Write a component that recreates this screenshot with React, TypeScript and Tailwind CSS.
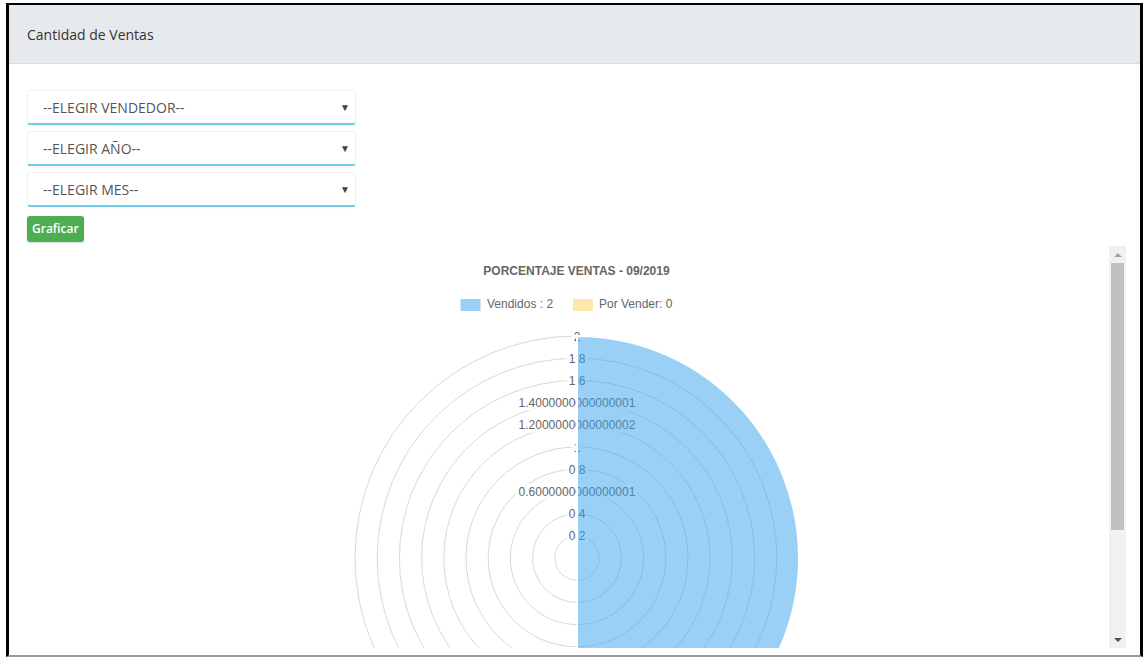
import React from 'react';

const SELECTS = ['--ELEGIR VENDEDOR--', '--ELEGIR AÑO--', '--ELEGIR MES--'];

const TICKS = [
  '0.2',
  '0.4',
  '0.6000000000000001',
  '0.8',
  '1',
  '1.2000000000000002',
  '1.4000000000000001',
  '1.6',
  '1.8',
  '2',
];

// polar chart geometry (px, relative to the chart svg)
const CX = 550;
const CY = 312;
const STEP = 22.2;
const R = STEP * 10;

function textWidth(s: string) {
  let w = 0;
  for (const ch of s) w += ch === '.' ? 3.34 : 6.67;
  return w;
}

function PolarChart() {
  return (
    <svg width={1082} height={402} className="block" style={{ fontFamily: '"Liberation Sans", Arial, sans-serif' }}>
      <text x={549.5} y={25} textAnchor="middle" dominantBaseline="central" fontSize={12} fontWeight={700} fill="#666">
        PORCENTAJE VENTAS - 09/2019
      </text>

      {/* legend */}
      <rect x={433.5} y={53} width={20} height={12} fill="rgba(54,162,235,0.5)" />
      <text x={460} y={58} dominantBaseline="central" fontSize={12} fill="#666">
        Vendidos : 2
      </text>
      <rect x={546} y={53} width={20} height={12} fill="rgba(255,206,86,0.5)" />
      <text x={572} y={58} dominantBaseline="central" fontSize={12} fill="#666">
        Por Vender: 0
      </text>

      {/* radial grid */}
      {TICKS.map((_, i) => (
        <circle key={i} cx={CX} cy={CY} r={STEP * (i + 1)} fill="none" stroke="#d8d8d8" strokeWidth={1} />
      ))}

      {/* tick labels with backdrop */}
      {TICKS.map((t, i) => {
        const w = textWidth(t);
        const y = CY - STEP * (i + 1);
        return (
          <g key={t}>
            <rect x={CX - w / 2 - 2} y={y - 8} width={w + 4} height={16} fill="rgba(255,255,255,0.75)" />
            <text x={CX} y={y + 0.5} textAnchor="middle" dominantBaseline="central" fontSize={12} fill="#666">
              {t}
            </text>
          </g>
        );
      })}

      {/* Vendidos segment: right half */}
      <path
        d={`M ${CX} ${CY} L ${CX} ${CY - R} A ${R} ${R} 0 0 1 ${CX} ${CY + R} Z`}
        fill="rgba(54,162,235,0.5)"
        stroke="#fff"
        strokeWidth={2}
      />
    </svg>
  );
}

function Scrollbar() {
  return (
    <div className="w-[17px] h-full bg-[#f1f1f1] flex flex-col items-center shrink-0">
      <div className="h-[17px] w-full flex items-center justify-center">
        <div className="w-0 h-0 border-l-[4px] border-r-[4px] border-b-[4px] border-l-transparent border-r-transparent border-b-[#a3a3a3]" />
      </div>
      <div className="w-[13px] h-[267px] bg-[#c1c1c1]" />
      <div className="flex-1" />
      <div className="h-[17px] w-full flex items-center justify-center">
        <div className="w-0 h-0 border-l-[4px] border-r-[4px] border-t-[4px] border-l-transparent border-r-transparent border-t-[#505050]" />
      </div>
    </div>
  );
}

export default function App() {
  return (
    <div className="w-[1144px] h-[657px] bg-white pl-[6px] pt-[3px] pr-px overflow-hidden" style={{ fontFamily: '"Open Sans", sans-serif' }}>
      <div className="h-[654px] border-l-[3px] border-r-[3px] border-t-2 border-b-2 border-black border-b-[#9a9a9a] flex flex-col overflow-hidden">
        <div className="h-[59px] shrink-0 bg-[#e6eaed] border-b border-[#d9dde0] flex items-center px-[18px]">
          <span className="text-[14px] text-[#333]">Cantidad de Ventas</span>
        </div>

        <div className="flex-1 px-[18px] pt-[26px] flex flex-col min-h-0">
          <div className="w-[329px] flex flex-col gap-[6px]">
            {SELECTS.map((s) => (
              <div
                key={s}
                className="h-[35px] rounded-[3px] border border-[#f1f1f1] border-b-2 border-b-[#6fcbea] shadow-[0_1px_2px_rgba(0,0,0,0.04)] flex items-center justify-between pl-[15px] pr-[5px] bg-white"
              >
                <span className="text-[14px] text-[#555]">{s}</span>
                <span className="text-[10px] text-[#444] leading-none">▼</span>
              </div>
            ))}
          </div>

          <button className="mt-[9px] self-start h-[26px] px-[5px] rounded-[3px] bg-[#4cae50] text-white text-[12px] font-semibold shadow-[0_1px_2px_rgba(0,0,0,0.15)]">
            Graficar
          </button>

          <div className="mt-[4px] h-[402px] w-[1099px] flex overflow-hidden">
            <div className="flex-1 overflow-hidden">
              <PolarChart />
            </div>
            <Scrollbar />
          </div>
        </div>
      </div>
    </div>
  );
}
